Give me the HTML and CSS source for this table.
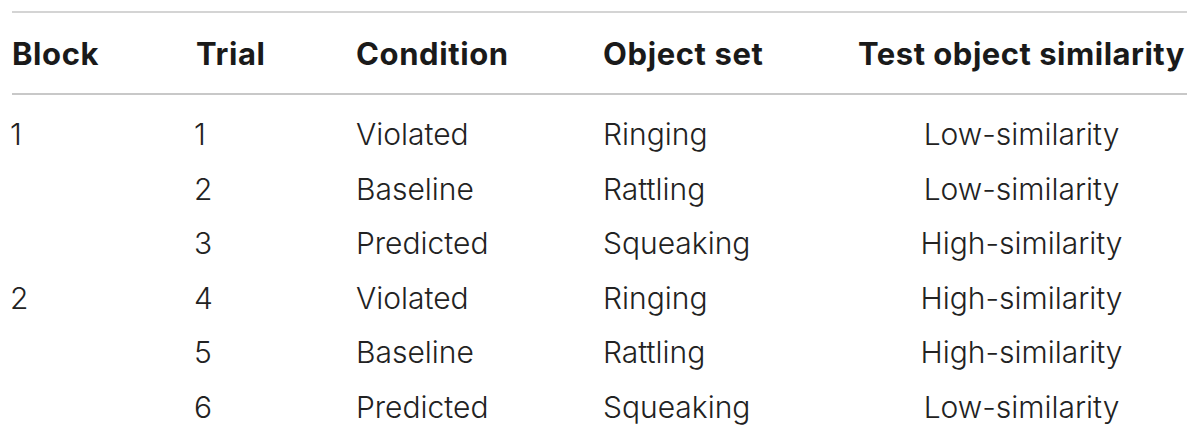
FILE: index.html
```html
<!DOCTYPE html>
<html lang="en">
<head>
<meta charset="utf-8">
<title>Trial table</title>
<link rel="stylesheet" href="styles.css">
</head>
<body>
<div class="table">
  <div class="row head">
    <div class="cell">Block</div>
    <div class="cell">Trial</div>
    <div class="cell">Condition</div>
    <div class="cell">Object set</div>
    <div class="cell last">Test object similarity</div>
  </div>
  <div class="body">
    <div class="row">
      <div class="cell">1</div><div class="cell">1</div><div class="cell">Violated</div><div class="cell">Ringing</div><div class="cell last">Low-similarity</div>
    </div>
    <div class="row">
      <div class="cell"></div><div class="cell">2</div><div class="cell">Baseline</div><div class="cell">Rattling</div><div class="cell last">Low-similarity</div>
    </div>
    <div class="row">
      <div class="cell"></div><div class="cell">3</div><div class="cell">Predicted</div><div class="cell">Squeaking</div><div class="cell last">High-similarity</div>
    </div>
    <div class="row">
      <div class="cell">2</div><div class="cell">4</div><div class="cell">Violated</div><div class="cell">Ringing</div><div class="cell last">High-similarity</div>
    </div>
    <div class="row">
      <div class="cell"></div><div class="cell">5</div><div class="cell">Baseline</div><div class="cell">Rattling</div><div class="cell last">High-similarity</div>
    </div>
    <div class="row">
      <div class="cell"></div><div class="cell">6</div><div class="cell">Predicted</div><div class="cell">Squeaking</div><div class="cell last">Low-similarity</div>
    </div>
  </div>
</div>
</body>
</html>
```
FILE: styles.css
```css
html, body {
  margin: 0;
  padding: 0;
  background: #ffffff;
}
body {
  padding: 11px 13px 0 12px;
  font-family: Inter, "Liberation Sans", Arial, sans-serif;
  color: #1e1e1e;
}
.table {
  width: 1175px;
  border-top: 2px solid #d4d4d4;
}
.row {
  display: grid;
  grid-template-columns: 184px 160px 247px 253px 1fr;
  align-items: center;
}
.cell {
  white-space: nowrap;
}
.cell.last {
  text-align: center;
}
.head {
  height: 80px;
  border-bottom: 2px solid #c8c8c8;
  font-size: 31px;
  font-weight: 700;
  letter-spacing: 0.6px;
  color: #1a1a1a;
}
.head .cell.last {
  text-align: right;
  padding-right: 2px;
  letter-spacing: 0.5px;
}
.body {
  padding-top: 12px;
}
.body .row {
  height: 54.5px;
  font-size: 30px;
  font-weight: 300;
  color: #222222;
}
.body .cell:first-child,
.body .cell:nth-child(2) {
  margin-left: -2px;
}
```
